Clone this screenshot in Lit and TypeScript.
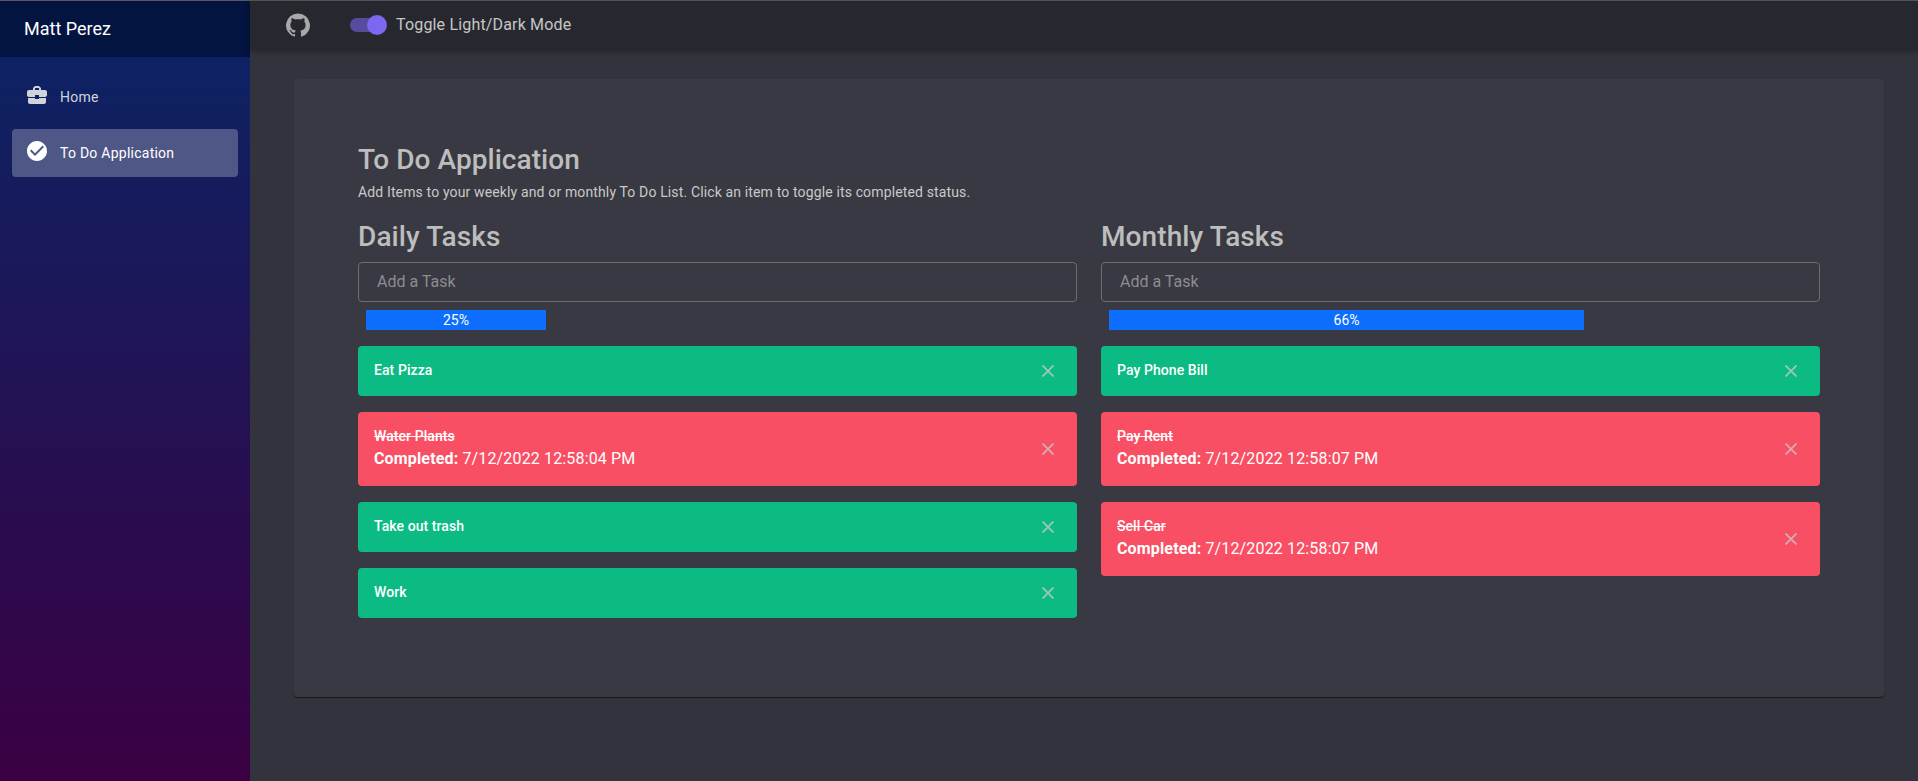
import { LitElement, html, css, svg } from "lit";
import { customElement } from "lit/decorators.js";

type Task = { name: string; completed?: string };

const daily: Task[] = [
  { name: "Eat Pizza" },
  { name: "Water Plants", completed: "7/12/2022 12:58:04 PM" },
  { name: "Take out trash" },
  { name: "Work" },
];
const monthly: Task[] = [
  { name: "Pay Phone Bill" },
  { name: "Pay Rent", completed: "7/12/2022 12:58:07 PM" },
  { name: "Sell Car", completed: "7/12/2022 12:58:07 PM" },
];

const icon = (d: string) => svg`<path d=${d}></path>`;
const GITHUB =
  "M12 1.27a11 11 0 00-3.48 21.46c.55.09.73-.28.73-.55v-1.84c-3.03.64-3.67-1.46-3.67-1.46-.55-1.29-1.28-1.65-1.28-1.65-.92-.65.1-.65.1-.65 1.1 0 1.73 1.1 1.73 1.1.92 1.65 2.57 1.2 3.21.92a2 2 0 01.64-1.47c-2.47-.27-5.04-1.19-5.04-5.5 0-1.1.46-2.1 1.2-2.84a3.76 3.76 0 010-2.93s.91-.28 3.11 1.1c1.8-.49 3.7-.49 5.5 0 2.1-1.38 3.02-1.1 3.02-1.1a3.76 3.76 0 010 2.93c.83.74 1.2 1.74 1.2 2.94 0 4.21-2.57 5.13-5.04 5.4.45.37.82.92.82 2.02v3.03c0 .27.1.64.73.55A11 11 0 0012 1.27";
const CASE =
  "M10 16v-1H3.01L3 19c0 1.11.89 2 2 2h14c1.11 0 2-.89 2-2v-4h-7v1h-4zm10-9h-4.01V5l-2-2h-4l-2 2v2H4c-1.1 0-2 .9-2 2v3c0 1.11.89 2 2 2h6v-2h4v2h6c1.1 0 2-.9 2-2V9c0-1.1-.9-2-2-2zm-6 0h-4V5h4v2z";
const CHECK =
  "M12 2C6.48 2 2 6.48 2 12s4.48 10 10 10 10-4.48 10-10S17.52 2 12 2zm-2 15l-5-5 1.41-1.41L10 14.17l7.59-7.59L19 8l-9 9z";

@customElement("app-root")
export class AppRoot extends LitElement {
  static styles = css`
    :host {
      display: block;
      height: 781px;
      overflow: hidden;
      font-family: Roboto, "Liberation Sans", sans-serif;
      background: #32333c;
      color: #c9c9c9;
    }
    .shell { display: flex; height: 781px; border-top: 1px solid #585858; box-sizing: border-box; }
    .side {
      width: 250px; flex: none; display: flex; flex-direction: column;
      background: linear-gradient(180deg, #0a2566 0%, #3a0043 100%);
    }
    .brand {
      height: 56px; flex: none; display: flex; align-items: center; padding: 0 0 2px 24px; box-sizing: border-box;
      background: #02143f; color: #fff; font-size: 18px;
    }
    .nav { display: flex; flex-direction: column; gap: 8px; padding: 16px 12px; }
    .nav-item {
      height: 48px; display: flex; align-items: center; padding-left: 13px; border-radius: 4px;
      color: #d0d2dc; font-size: 14px; letter-spacing: .25px;
    }
    .nav-item.active { background: #4f5786; color: #fff; }
    .nav-item svg { width: 24px; height: 24px; fill: currentColor; margin: -5px 11px 0 0; flex: none; }
    .content { flex: 1; min-width: 0; display: flex; flex-direction: column; }
    .top {
      height: 49px; flex: none; display: flex; align-items: center; padding: 0 0 2px 35px; box-sizing: border-box;
      background: #27282f; box-shadow: 0 2px 6px rgba(0,0,0,.25);
    }
    .gh { width: 26px; height: 26px; fill: #a8a8a8; margin-right: 39px; flex: none; }
    .switch { position: relative; width: 34px; height: 14px; border-radius: 7px; background: #554c9e; margin-right: 12px; }
    .thumb {
      position: absolute; right: -3px; top: -3px; width: 20px; height: 20px; border-radius: 50%;
      background: #7b68ee;
    }
    .toggle-label { font-size: 16px; color: #c6c6c6; letter-spacing: .17px; }
    .card {
      margin: 29px 34px 0 44px; height: 618px; box-sizing: border-box; padding: 64px 64px 0;
      background: #383942; border-radius: 4px;
      box-shadow: 0 1px 1px rgba(0,0,0,.55);
    }
    h1 { margin: 0; font-size: 28px; font-weight: 500; line-height: 33.6px; color: #bdbdbd; letter-spacing: .06px; }
    .lead { margin: 5px 0 0; font-size: 14px; line-height: 21px; color: #c9c9c9; letter-spacing: .14px; }
    .cols { display: grid; grid-template-columns: 1fr 1fr; gap: 24px; margin-top: 17px; }
    h2 { margin: 0 0 8.8px; font-size: 28px; font-weight: 500; line-height: 33.6px; color: #bdbdbd; letter-spacing: .1px; }
    input {
      display: block; width: 100%; box-sizing: border-box; height: 40px; padding: 0 18px;
      background: transparent; border: 1px solid #6e6e6e; border-radius: 4px; outline: none;
      font: 400 16px Roboto, sans-serif; color: #ccc;
    }
    input::placeholder { color: #8d8d8f; opacity: 1; }
    .bar-wrap { margin: 8px 0 16px 8px; height: 20px; }
    .bar {
      height: 20px; background: #0d6efd; color: #fff; font-size: 14px; line-height: 20px; text-align: center;
    }
    .list { display: flex; flex-direction: column; gap: 16px; }
    .task {
      display: flex; align-items: center; justify-content: space-between; box-sizing: border-box;
      min-height: 50px; padding: 12px 23px 12px 16px; border-radius: 4px; color: #fff;
      background: #0cbb84;
    }
    .task.done { background: #f94f64; min-height: 74px; }
    .name { font-size: 14px; font-weight: 500; line-height: 21px; letter-spacing: .07px; margin-top: -1px; }
    .done .name { text-decoration: line-through; margin-top: 0; }
    .stamp { font-size: 16px; line-height: 24px; letter-spacing: .15px; }
    .stamp b { font-weight: 700; }
    .x { width: 12px; height: 12px; flex: none; stroke: rgba(200,200,200,.8); stroke-width: 1.7; fill: none; }
  `;

  private renderColumn(title: string, pct: number, tasks: Task[]) {
    return html`
      <section>
        <h2>${title}</h2>
        <input placeholder="Add a Task" />
        <div class="bar-wrap"><div class="bar" style="width:${pct * 7.2}px">${pct}%</div></div>
        <div class="list">
          ${tasks.map(
            (t) => html`
              <div class="task ${t.completed ? "done" : ""}">
                <div>
                  <div class="name">${t.name}</div>
                  ${t.completed
                    ? html`<div class="stamp"><b>Completed:</b> ${t.completed}</div>`
                    : ""}
                </div>
                <svg class="x" viewBox="0 0 12 12"><path d="M.5.5l11 11M11.500.5l-11 11"></path></svg>
              </div>
            `
          )}
        </div>
      </section>
    `;
  }

  render() {
    return html`
      <div class="shell">
        <aside class="side">
          <div class="brand">Matt Perez</div>
          <nav class="nav">
            <div class="nav-item"><svg viewBox="0 0 24 24">${icon(CASE)}</svg>Home</div>
            <div class="nav-item active"><svg viewBox="0 0 24 24">${icon(CHECK)}</svg>To Do Application</div>
          </nav>
        </aside>
        <div class="content">
          <header class="top">
            <svg class="gh" viewBox="0 0 24 24">${icon(GITHUB)}</svg>
            <div class="switch"><div class="thumb"></div></div>
            <span class="toggle-label">Toggle Light/Dark Mode</span>
          </header>
          <main class="card">
            <h1>To Do Application</h1>
            <p class="lead">Add Items to your weekly and or monthly To Do List. Click an item to toggle its completed status.</p>
            <div class="cols">
              ${this.renderColumn("Daily Tasks", 25, daily)}
              ${this.renderColumn("Monthly Tasks", 66, monthly)}
            </div>
          </main>
        </div>
      </div>
    `;
  }
}
